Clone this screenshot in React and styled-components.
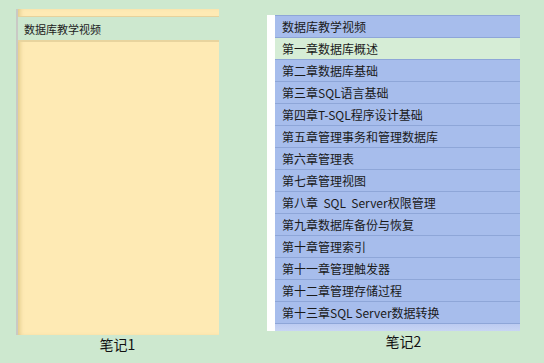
import React from "react";
import styled, { createGlobalStyle } from "styled-components";

const GlobalStyle = createGlobalStyle`
  html, body {
    margin: 0;
    padding: 0;
    background: #cde8cf;
  }
  body {
    font-family: "Noto Sans CJK SC", "Liberation Sans", sans-serif;
    color: #1a1a1a;
  }
`;

const Page = styled.div`
  display: flex;
  align-items: flex-start;
  width: 544px;
  height: 363px;
  padding: 9px 0 0 16px;
  box-sizing: border-box;
  overflow: hidden;
`;

const Column = styled.div`
  display: flex;
  flex-direction: column;
  width: ${(p) => p.width}px;
  margin-top: ${(p) => p.top || 0}px;
  margin-left: ${(p) => p.left || 0}px;
`;

// left note: yellow pad with one green header row
const NotePad = styled.div`
  display: flex;
  flex-direction: column;
  height: 326px;
  background: #feeab4;
  border-left: 2px solid #c9c9c5;
  box-shadow: inset 4px 0 4px -2px rgba(170, 140, 60, 0.35);
`;

const PadTop = styled.div`
  height: 7px;
  border-bottom: 1px solid #e6d29c;
`;

const PadRow = styled.div`
  height: 23px;
  display: flex;
  align-items: center;
  padding-left: 6px;
  font-size: 11px;
  color: #222;
  background: #cde8cf;
  border-bottom: 2px solid #e8d49e;
`;

const Caption = styled.div`
  text-align: center;
  font-size: 14px;
  line-height: 16px;
  margin-top: ${(p) => p.top}px;
  padding-left: ${(p) => p.shift || 0}px;
  color: #111;
`;

// right note: chapter list
const ListFrame = styled.div`
  display: flex;
  height: 316px;
  background: #ffffff;
  padding-left: 8px;
`;

const List = styled.div`
  flex: 1;
  display: flex;
  flex-direction: column;
  border-top: 1px solid #8ea6d8;
`;

const Row = styled.div`
  height: 21px;
  display: flex;
  align-items: center;
  padding-left: 7px;
  font-size: 12px;
  color: #1a1a1a;
  white-space: pre;
  background: ${(p) => (p.active ? "#d6edd6" : "#a7bdec")};
  border-bottom: 1px solid #8ea6d8;
`;

const ListFoot = styled.div`
  flex: 1;
  background: linear-gradient(#bccbf1, #c8d5f4);
`;

const chapters = [
  "数据库教学视频",
  "第一章数据库概述",
  "第二章数据库基础",
  "第三章SQL语言基础",
  "第四章T-SQL程序设计基础",
  "第五章管理事务和管理数据库",
  "第六章管理表",
  "第七章管理视图",
  "第八章  SQL  Server权限管理",
  "第九章数据库备份与恢复",
  "第十章管理索引",
  "第十一章管理触发器",
  "第十二章管理存储过程",
  "第十三章SQL Server数据转换",
];

export default function App() {
  return (
    <>
      <GlobalStyle />
      <Page>
        <Column width={203}>
          <NotePad>
            <PadTop />
            <PadRow>数据库教学视频</PadRow>
          </NotePad>
          <Caption top={1}>笔记1</Caption>
        </Column>
        <Column width={253} top={6} left={48}>
          <ListFrame>
            <List>
              {chapters.map((c, i) => (
                <Row key={i} active={i === 1}>
                  {c}
                </Row>
              ))}
              <ListFoot />
            </List>
          </ListFrame>
          <Caption top={2} shift={20}>笔记2</Caption>
        </Column>
      </Page>
    </>
  );
}
